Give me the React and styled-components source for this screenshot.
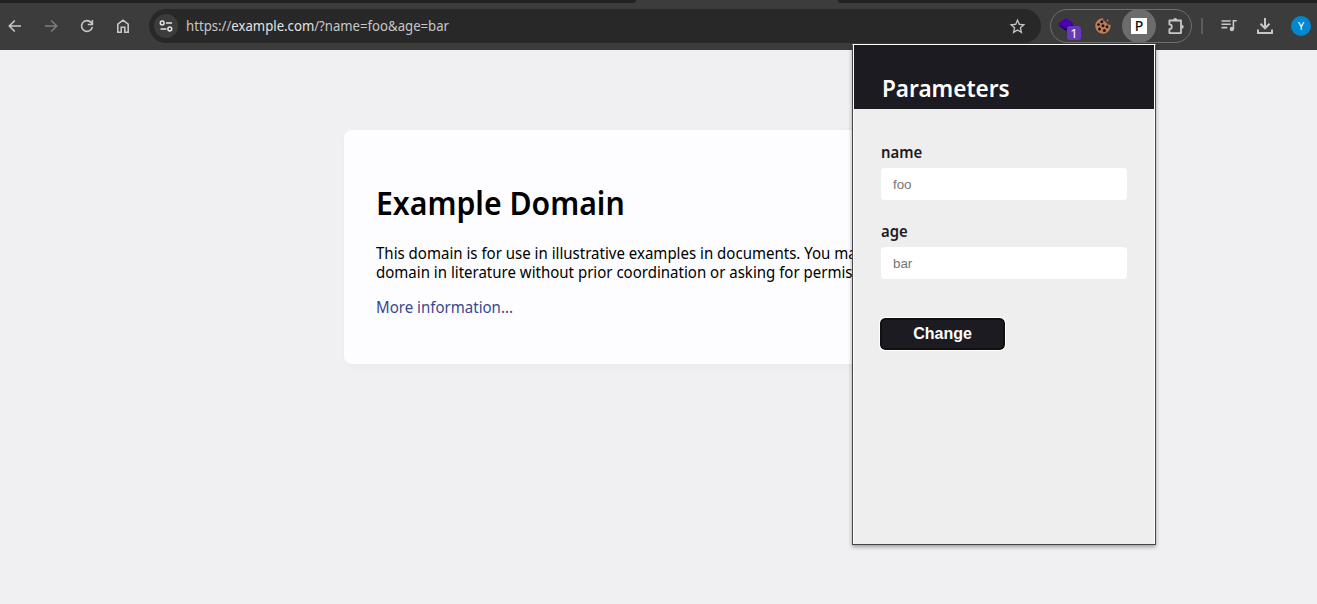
import React from 'react';
import styled, { createGlobalStyle } from 'styled-components';
import { MdStarBorder } from 'react-icons/md';

const Global = createGlobalStyle`
  * { box-sizing: border-box; }
  html, body { margin: 0; }
  body { font-family: "Noto Sans", sans-serif; overflow: hidden; }
`;

const Window = styled.div`
  position: relative;
  width: 1317px;
  height: 604px;
  overflow: hidden;
  background: #f0f0f2;
`;

const TabStrip = styled.div`
  display: flex;
  height: 3px;
  background: #3c3c3c;
`;
const Tabs = styled.div`
  width: ${p => p.$width};
  background: #202322;
  border-radius: ${p => (p.$side === 'left' ? '0 0 6px 0' : '0 0 0 6px')};
`;
const ActiveTab = styled.div`
  width: 202px;
`;

const Toolbar = styled.header`
  display: flex;
  align-items: center;
  height: 47px;
  background: #3c3c3c;
  padding: 0 6px 1px 3px;
`;
const NavGroup = styled.nav`
  display: flex;
  gap: 12px;
  width: 146px;
`;
const IconButton = styled.button`
  display: grid;
  place-items: center;
  width: 24px;
  height: 24px;
  padding: 0;
  border: 0;
  background: none;
  color: ${p => (p.$muted ? '#7c7c7c' : '#c7c7c7')};
`;
const Omnibox = styled.div`
  display: flex;
  align-items: center;
  width: 892px;
  height: 34px;
  padding: 0 12px 0 5px;
  border-radius: 17px;
  background: #282828;
`;
const SiteInfo = styled.span`
  display: grid;
  place-items: center;
  width: 24px;
  height: 24px;
  border-radius: 50%;
  background: #3c3c3c;
  color: #e3e3e3;
`;
const Narrow = styled.span`
  display: inline-block;
  transform: scaleX(${p => p.$scale || 0.94});
  transform-origin: left center;
`;
const Url = styled.span`
  flex: 1;
  margin-left: 8px;
  font-size: 14px;
  line-height: 20px;
  color: #c7c7c7;
  b { font-weight: 400; color: #e3e3e3; }
`;
const Extensions = styled.div`
  display: flex;
  align-items: center;
  width: 142px;
  height: 34px;
  margin-left: 9px;
  padding-left: 5px;
  border: 1px solid #6e6e6e;
  border-radius: 17px;
`;
const StackExtension = styled.span`
  position: relative;
  width: 24px;
  height: 24px;
  svg { display: block; }
`;
const Badge = styled.span`
  position: absolute;
  left: 11px;
  top: 12px;
  width: 14px;
  height: 14px;
  border-radius: 3px;
  background: #673ab7;
  color: #fff;
  font: 13px/15px "Noto Sans", sans-serif;
  text-align: center;
`;
const CookieExtension = styled.span`
  display: grid;
  margin-left: 15px;
`;
const ActiveExtension = styled.span`
  display: grid;
  place-items: center;
  width: 34px;
  height: 34px;
  margin-left: 11px;
  border-radius: 50%;
  background: #6c6c6c;
`;
const Letter = styled.span`
  width: 16px;
  height: 16px;
  background: #fff;
  color: #111;
  font: 500 14px/16px "Noto Sans", sans-serif;
  text-align: center;
`;
const PuzzleButton = styled(IconButton)`
  margin-left: 8px;
`;
const Divider = styled.span`
  width: 2px;
  height: 16px;
  margin: 0 14px 0 9px;
  background: #5c5c5c;
`;
const Actions = styled.div`
  display: flex;
  align-items: center;
  gap: 12px;
`;
const Avatar = styled.span`
  width: 20px;
  height: 20px;
  margin-left: 2px;
  border-radius: 50%;
  background: #0288d1;
  color: #fff;
  font-size: 11px;
  line-height: 20px;
  text-align: center;
`;

const Page = styled.main`
  padding-top: 80px;
`;
const Card = styled.article`
  width: 629px;
  height: 234px;
  margin: 0 auto;
  padding: 53px 32px;
  border-radius: 8px;
  background: #fdfdff;
  box-shadow: 2px 3px 7px 2px rgba(0, 0, 0, 0.02);
`;
const CardTitle = styled.h1`
  margin: 0;
  font-size: 32px;
  line-height: 40px;
  font-weight: 600;
`;
const Text = styled.p`
  margin: ${p => p.$top} 0 0;
  font-size: 16px;
  line-height: 19px;
  white-space: nowrap;
`;
const Link = styled.a`
  color: #38488f;
`;

const Popup = styled.section`
  position: absolute;
  left: 852px;
  top: 44px;
  width: 304px;
  height: 501px;
  border: 1px solid #454545;
  border-top: 1px solid #fff;
  background: #eee;
  box-shadow: 0 2px 4px rgba(0, 0, 0, 0.35);
`;
const PopupInner = styled.div`
  height: 100%;
  border: solid #fff;
  border-width: 0 1px;
`;
const PopupHeader = styled.div`
  height: 64px;
  padding: 27px 28px 0;
  background: #1c1b22;
`;
const PopupTitle = styled.h2`
  margin: 0;
  color: #fff;
  font-size: 24px;
  line-height: 32px;
  font-weight: 600;
`;
const Form = styled.form`
  padding: 33px 27px 0;
`;
const Field = styled.label`
  display: block;
  height: 79px;
  color: #1c1b22;
  font-size: 16px;
  line-height: 20px;
  font-weight: 600;
`;
const FieldName = styled(Narrow)`
  display: block;
`;
const Input = styled.input`
  display: block;
  width: 246px;
  height: 32px;
  margin-top: 6px;
  padding: 1px 12px 0;
  border: 0;
  border-radius: 4px;
  background: #fff;
  font: 13.333px "Liberation Sans", sans-serif;
  &::placeholder { color: #757575; }
`;
const ChangeButton = styled.button`
  display: block;
  width: 125px;
  height: 32px;
  margin: 18px 0 0 -1px;
  padding: 0;
  border: 2px solid #101010;
  border-radius: 5px;
  outline: 1px solid #fff;
  background: #1c1b22;
  color: #fff;
  font: bold 16px "Liberation Sans", sans-serif;
`;

const Stroke = ({ size = 16, width = 1.6, children }) => (
  <svg width={size} height={size} viewBox={`0 0 ${size} ${size}`} fill="none" stroke="currentColor" strokeWidth={width}>
    {children}
  </svg>
);
const ArrowIcon = ({ flip }) => (
  <Stroke>
    <path d={flip ? 'M2 8h11M8.2 2.5 13.7 8l-5.5 5.5' : 'M14 8H3M7.8 2.5 2.3 8l5.5 5.5'} />
  </Stroke>
);
const ReloadIcon = () => (
  <Stroke>
    <path d="M13.3 8.8A5.4 5.4 0 1 1 12 4.4L13.3 6M13.4 2v4.5H8.8" />
  </Stroke>
);
const HomeIcon = () => (
  <Stroke>
    <path d="M2.8 14.2V6.1L8 2.2l5.2 3.9v8.1H9.8V9.3H6.2v4.9Z" />
  </Stroke>
);
const TuneIcon = () => (
  <Stroke width={1.5}>
    <circle cx="4.2" cy="5" r="1.9" />
    <path d="M8 5h6M2.5 11h6" />
    <circle cx="11.8" cy="11" r="1.9" />
  </Stroke>
);
const StackIcon = () => (
  <svg width="20" height="20" viewBox="0 0 20 20">
    <path d="M2.500 11.500 10 7l7.500 4.500L10 17Z" fill="#250078" />
    <path d="M2 9.500 10 4l8 5.500-8 5Z" fill="#4a00b0" />
  </svg>
);
const CookieIcon = () => (
  <svg width="16" height="16" viewBox="0 0 16 16">
    <path d="M8.500.3a1.500 1.500 0 0 0 .6 2.500c1 .3.8 1.700 2 1.900.9.200.7 1.500 1.700 1.700.9.100 1.300.6 2.700.3A7.700 7.700 0 1 1 8.500.3Z" fill="#c07d58" />
    <g fill="#1e1512">
      <circle cx="6.800" cy="3.700" r="1.500" /><circle cx="3.600" cy="6.600" r="1.400" /><circle cx="8" cy="7.800" r="1.500" />
      <circle cx="12" cy="8.900" r="1.400" /><circle cx="4.500" cy="11" r="1.500" /><circle cx="9.400" cy="12.600" r="1.500" />
    </g>
    <circle cx="12.600" cy="2.500" r=".9" fill="#c07d58" />
  </svg>
);
const PuzzleIcon = () => (
  <Stroke size={18} width={1.8}>
    <path d="M2.400 3.500H14v12.600H2.400v-3.900a2.400 2.400 0 0 0 0-4.800Z" strokeLinejoin="round" />
    <path d="M6.100 3.200a2.100 2.100 0 0 1 4.200 0ZM14.600 7.700a2.100 2.100 0 0 1 0 4.200Z" fill="currentColor" stroke="none" />
  </Stroke>
);
const MediaIcon = () => (
  <Stroke>
    <path d="M.5 3h9.200M.5 6.300h9.200M.5 9.600h5.800M12.400 11V2.800h3.300" />
    <circle cx="10.900" cy="11" r="2.200" fill="currentColor" stroke="none" />
  </Stroke>
);
const DownloadIcon = () => (
  <Stroke size={18} width={2}>
    <path d="M9 1v10M4.500 6.800 9 11.300l4.500-4.500M2 12.500V16h14v-3.500" />
  </Stroke>
);

export default function App() {
  return (
    <Window>
      <Global />
      <TabStrip>
        <Tabs $width="636px" $side="left" />
        <ActiveTab />
        <Tabs $width="479px" $side="right" />
      </TabStrip>
      <Toolbar>
        <NavGroup>
          <IconButton aria-label="Back"><ArrowIcon /></IconButton>
          <IconButton aria-label="Forward" $muted><ArrowIcon flip /></IconButton>
          <IconButton aria-label="Reload"><ReloadIcon /></IconButton>
          <IconButton aria-label="Home"><HomeIcon /></IconButton>
        </NavGroup>
        <Omnibox>
          <SiteInfo><TuneIcon /></SiteInfo>
          <Url><Narrow>https://<b>example.com</b>/?name=foo&amp;age=bar</Narrow></Url>
          <IconButton aria-label="Bookmark"><MdStarBorder size={19} /></IconButton>
        </Omnibox>
        <Extensions>
          <StackExtension><StackIcon /><Badge>1</Badge></StackExtension>
          <CookieExtension><CookieIcon /></CookieExtension>
          <ActiveExtension><Letter>P</Letter></ActiveExtension>
          <PuzzleButton aria-label="Extensions"><PuzzleIcon /></PuzzleButton>
        </Extensions>
        <Divider />
        <Actions>
          <IconButton aria-label="Media"><MediaIcon /></IconButton>
          <IconButton aria-label="Downloads"><DownloadIcon /></IconButton>
          <Avatar>Y</Avatar>
        </Actions>
      </Toolbar>
      <Page>
        <Card>
          <CardTitle><Narrow $scale={0.944}>Example Domain</Narrow></CardTitle>
          <Text $top="21px">
            <Narrow $scale={0.9385}>
              This domain is for use in illustrative examples in documents. You may use this<br />
              domain in literature without prior coordination or asking for permission.
            </Narrow>
          </Text>
          <Text $top="16px"><Link><Narrow>More information...</Narrow></Link></Text>
        </Card>
      </Page>
      <Popup>
        <PopupInner>
          <PopupHeader><PopupTitle><Narrow>Parameters</Narrow></PopupTitle></PopupHeader>
          <Form>
            <Field><FieldName $scale={0.93}>name</FieldName><Input placeholder="foo" /></Field>
            <Field><FieldName $scale={0.93}>age</FieldName><Input placeholder="bar" /></Field>
            <ChangeButton type="button">Change</ChangeButton>
          </Form>
        </PopupInner>
      </Popup>
    </Window>
  );
}
